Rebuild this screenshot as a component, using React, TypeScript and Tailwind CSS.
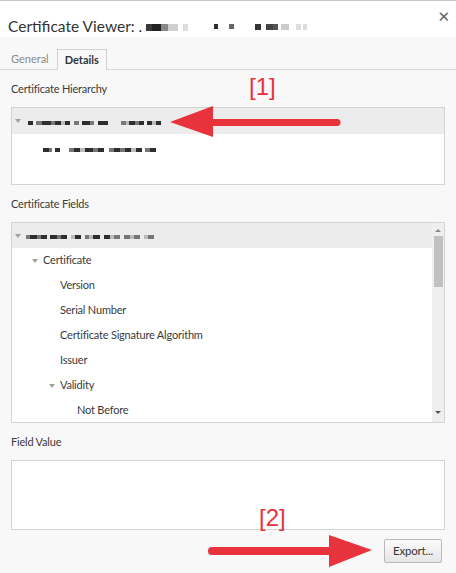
import { ReactNode } from 'react';

type Seg = [number, string];

// pixelated (redacted) text, drawn as blocks
function Redacted({ segs, h = 4, scale = 1 }: { segs: Seg[]; h?: number; scale?: number }) {
  return (
    <span className="inline-flex items-center" aria-hidden>
      {segs.map(([w, c], i) => (
        <span key={i} style={{ width: Math.round(w * scale), height: h, background: c }} className="inline-block" />
      ))}
    </span>
  );
}

const dark = '#2e2e2e';
const mid = '#777';
const light = '#bbb';
const none = 'transparent';

const hierTop: Seg[] = [
  [4, dark], [2, none], [5, mid], [3, dark], [4, dark], [3, mid], [5, dark], [3, light], [4, dark], [3, none],
  [4, mid], [2, none], [6, dark], [3, mid], [3, none], [8, dark], [10, none], [4, mid], [2, light], [5, dark],
  [3, mid], [4, dark], [2, none], [4, dark], [3, light], [4, dark],
];
const hierSub: Seg[] = [
  [4, dark], [2, mid], [2, none], [3, dark], [6, none], [3, mid], [4, dark], [3, light], [5, dark], [3, mid],
  [4, dark], [3, none], [3, mid], [4, dark], [3, mid], [4, dark], [3, light], [4, dark], [2, none], [3, mid], [4, dark],
];
const fieldsTop: Seg[] = [
  [3, mid], [5, dark], [3, mid], [4, dark], [2, none], [5, dark], [3, mid], [4, dark], [3, none], [3, light],
  [4, dark], [3, none], [3, mid], [3, light], [5, dark], [3, none], [4, dark], [3, light], [4, mid], [3, none],
  [4, mid], [3, light], [4, mid], [3, none], [3, light], [4, mid],
];

function Caret() {
  return <span className="block w-0 h-0 border-l-[3px] border-r-[3px] border-t-[4px] border-l-transparent border-r-transparent border-t-[#a0a0a0]" />;
}

function Row({ level, open, selected, children }: { level: number; open?: boolean; selected?: boolean; children: ReactNode }) {
  const pads = ['pl-0', 'pl-[17px]', 'pl-[34px]', 'pl-[51px]'];
  return (
    <div className={`h-[25px] flex items-center ${pads[level]} ${selected ? 'bg-[#ececec]' : ''}`}>
      <span className="w-[12px] flex items-center justify-center shrink-0">{open && <Caret />}</span>
      <span className="ml-[2px] text-[11px] tracking-[-0.2px] text-[#3a3a3a] whitespace-nowrap">{children}</span>
    </div>
  );
}

export default function App() {
  return (
    <div className="w-[456px] h-[573px] relative overflow-hidden bg-[#f8f8f8] text-[#333] font-['Lato',sans-serif]">
      <div className="h-px bg-[#cbc5bf]" />

      {/* title bar */}
      <div className="h-[36px] bg-white flex justify-between pl-[8px] pr-[6px]">
        <div className="mt-[15px] h-[21px] flex items-center text-[15.5px] leading-[21px] text-[#333]">
          <span>Certificate Viewer: .</span>
          <span className="ml-[4px] mt-[1px] flex items-start">
            <Redacted h={7} segs={[[6, '#3a3a3a'], [9, '#222'], [7, '#888'], [10, '#cfcfcf'], [5, none], [5, '#ddd']]} />
            <span className="w-[26px]" />
            <Redacted h={5} segs={[[4, dark], [11, none], [5, '#666']]} />
            <span className="w-[21px]" />
            <Redacted h={6} segs={[[6, '#333'], [5, none], [7, '#444'], [5, '#555'], [3, none], [8, '#ccc'], [7, none], [5, '#ddd'], [2, none], [4, '#ddd']]} />
          </span>
        </div>
        <span className="mt-[8px] text-[15px] leading-[16px] text-[#666] font-['DejaVu_Sans',sans-serif]">✕</span>
      </div>

      {/* tabs */}
      <div className="pt-[12px] pl-[8px] flex items-end border-b border-[#d8d8d8] text-[11px]">
        <div className="h-[20px] px-[3px] flex items-center text-[#8a8a8a]">General</div>
        <div className="ml-[5px] h-[21px] -mb-px px-[7px] flex items-center border border-b-0 border-[#d0d0d0] bg-[#f8f8f8] font-bold text-[#333]">
          Details
        </div>
      </div>

      <div className="px-[11px] text-[11px] tracking-[-0.2px]">
        <div className="mt-[11px] h-[16px] leading-[16px] text-[#3a3a3a]">Certificate Hierarchy</div>
        <div className="mt-[10px] h-[78px] bg-white border border-[#d4d4d4] overflow-hidden">
          <div className="h-[26px] bg-[#ececec] flex items-center">
            <span className="w-[12px] flex justify-center"><Caret /></span>
            <span className="ml-[4px]"><Redacted segs={hierTop} scale={1.25} /></span>
          </div>
          <div className="h-[28px] flex items-center pl-[31px] pt-[4px]">
            <Redacted segs={hierSub} scale={1.5} />
          </div>
        </div>

        <div className="mt-[11px] h-[16px] leading-[16px] text-[#3a3a3a]">Certificate Fields</div>
        <div className="mt-[10px] h-[201px] bg-white border border-[#d4d4d4] flex overflow-hidden">
          <div className="flex-1 min-w-0">
            <Row level={0} open selected><Redacted segs={fieldsTop} scale={1.4} /></Row>
            <Row level={1} open>Certificate</Row>
            <Row level={2}>Version</Row>
            <Row level={2}>Serial Number</Row>
            <Row level={2}>Certificate Signature Algorithm</Row>
            <Row level={2}>Issuer</Row>
            <Row level={2} open>Validity</Row>
            <Row level={3}>Not Before</Row>
          </div>
          <div className="w-[12px] bg-[#efefef] flex flex-col items-center">
            <span className="mt-[6px] block w-0 h-0 border-l-[3px] border-r-[3px] border-b-[3px] border-l-transparent border-r-transparent border-b-[#888]" />
            <div className="mt-[4px] w-[9px] h-[51px] bg-[#c1c1c1]" />
            <div className="flex-1" />
            <span className="mb-[8px] block w-0 h-0 border-l-[3px] border-r-[3px] border-t-[3px] border-l-transparent border-r-transparent border-t-[#555]" />
          </div>
        </div>

        <div className="mt-[11px] h-[16px] leading-[16px] text-[#3a3a3a]">Field Value</div>
        <div className="mt-[10px] h-[70px] bg-white border border-[#d4d4d4]" />

        <div className="mt-[9px] flex justify-end pr-[3px]">
          <button className="w-[58px] h-[24px] rounded-[2px] border border-[#b9b9b9] bg-gradient-to-b from-[#fbfbfb] to-[#e6e6e6] text-[11.5px] text-[#333]">
            Export...
          </button>
        </div>
      </div>

      {/* annotations */}
      <div className="absolute left-[249px] top-[73px] text-[24px] leading-[28px] text-[#e8323c] font-['Liberation_Sans',sans-serif]">[1]</div>
      <div className="absolute left-[259px] top-[504px] text-[24px] leading-[28px] text-[#e8323c] font-['Liberation_Sans',sans-serif]">[2]</div>
      <svg className="absolute left-0 top-0" width={456} height={573} viewBox="0 0 456 573">
        <line x1={208} y1={122.5} x2={337} y2={122.5} stroke="#e8323c" strokeWidth={7} strokeLinecap="round" />
        <polygon points="170,122 213,106 213,137" fill="#e8323c" />
        <line x1={212} y1={551} x2={332} y2={551} stroke="#e8323c" strokeWidth={8} strokeLinecap="round" />
        <polygon points="372,550 329,535 329,567" fill="#e8323c" />
      </svg>
    </div>
  );
}
